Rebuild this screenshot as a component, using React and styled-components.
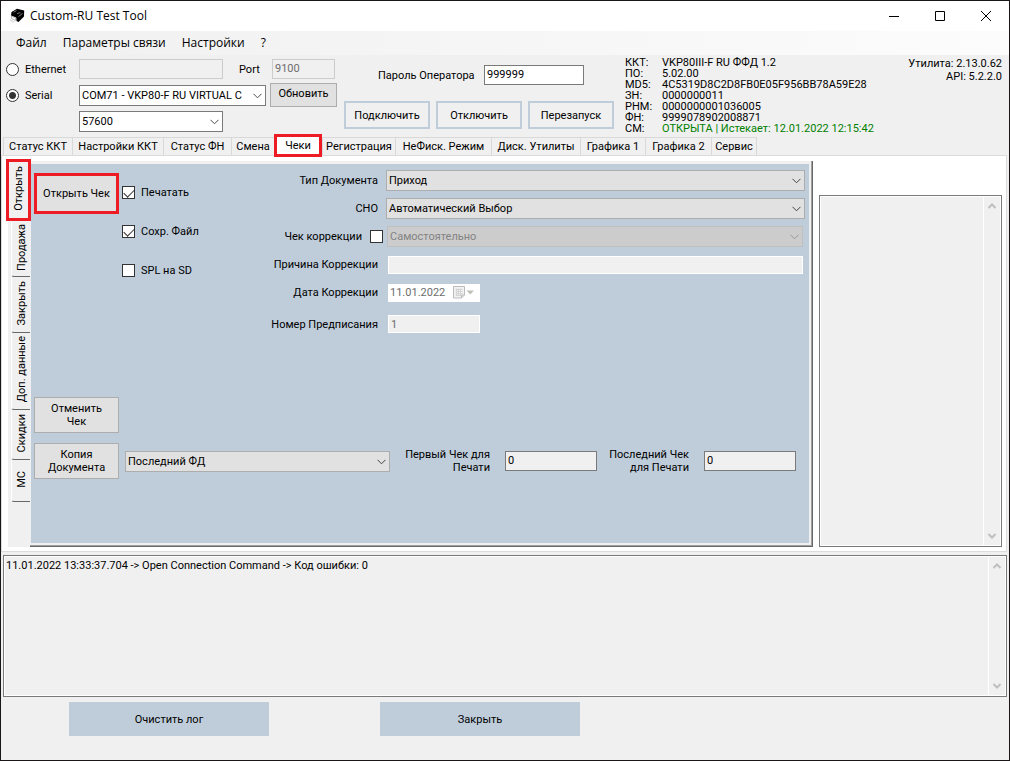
import React, { useState } from "react"
import styled, { createGlobalStyle, css } from "styled-components"

const tabs = [
    { label: "Статус ККТ", width: 69 },
    { label: "Настройки ККТ", width: 91 },
    { label: "Статус ФН", width: 68 },
    { label: "Смена", width: 43 },
    { label: "Чеки", width: 48 },
    { label: "Регистрация", width: 73 },
    { label: "НеФиск. Режим", width: 96 },
    { label: "Диск. Утилиты", width: 89 },
    { label: "Графика 1", width: 65 },
    { label: "Графика 2", width: 66 },
    { label: "Сервис", width: 46 },
]

const sideTabs = [
    { label: "Открыть", height: 62 },
    { label: "Продажа", height: 56 },
    { label: "Закрыть", height: 56 },
    { label: "Доп. данные", height: 77 },
    { label: "Скидки", height: 50 },
    { label: "МС", height: 42 },
]

const info = [
    { name: "ККТ:", value: "VKP80III-F RU ФФД 1.2" },
    { name: "ПО:", value: "5.02.00" },
    { name: "MD5:", value: "4C5319D8C2D8FB0E05F956BB78A59E28" },
    { name: "ЗН:", value: "0000000011" },
    { name: "РНМ:", value: "0000000001036005" },
    { name: "ФН:", value: "9999078902008871" },
    { name: "СМ:", value: "ОТКРЫТА | Истекает: 12.01.2022 12:15:42", ok: true },
]

function Chevron() {
    return (
        <svg width="9" height="6" viewBox="0 0 9 6" fill="none" stroke="currentColor">
            <path d="M0.5 0.8 L4.5 4.8 L8.5 0.8" />
        </svg>
    )
}

function Combo({ value, label, id, disabled, variant, width }) {
    return (
        <ComboBox $width={width} $variant={variant}>
            <select id={id} aria-label={label} disabled={disabled} defaultValue={value}>
                <option>{value}</option>
            </select>
            <ComboArrow><Chevron /></ComboArrow>
        </ComboBox>
    )
}

function ScrollArrow({ up }) {
    return (
        <svg width="8" height="6" viewBox="0 0 8 6" fill="none" stroke="#bfbfbf" strokeWidth="2">
            <path d={up ? "M0.5 5 L4 1.5 L7.5 5" : "M0.5 1 L4 4.5 L7.5 1"} />
        </svg>
    )
}

function ScrollText({ value, label }) {
    return (
        <ScrollBox>
            <textarea readOnly aria-label={label} defaultValue={value} />
            <ScrollBar>
                <ScrollArrow up />
                <ScrollArrow />
            </ScrollBar>
        </ScrollBox>
    )
}

function Check({ label, defaultChecked }) {
    return (
        <CheckLabel>
            <CheckBox type="checkbox" defaultChecked={defaultChecked} />
            {label}
        </CheckLabel>
    )
}

function PrinterLogo() {
    return (
        <svg width="16" height="16" viewBox="0 0 16 16">
            <path d="M2.5 4 L8 0.8 L15.2 2.5 L15 8.5 L9.5 14 L7.5 13 L7.2 9.5 L2 7.5 Z" fill="#000" />
            <path d="M4.5 4.2 L7.5 2.6 M8 5.6 L11.5 4.6 M9.5 8.5 L13.5 5.5" stroke="#999" strokeWidth="0.8" />
            <path d="M2.5 8 L6.8 10 L6.5 12.5 L2.5 10.5 Z" fill="#fff" stroke="#888" strokeWidth="0.6" />
            <path d="M1 11 L4.5 13 L6.5 14.5 L3.5 14.5 L0.8 12.5 Z" fill="#ddd" />
        </svg>
    )
}

function TitleBar() {
    return (
        <Title>
            <PrinterLogo />
            <h1>Custom-RU Test Tool</h1>
            <WindowButton aria-label="Свернуть">
                <svg width="10" height="10"><path d="M0 5.5 H10" stroke="#000" /></svg>
            </WindowButton>
            <WindowButton aria-label="Развернуть">
                <svg width="10" height="10"><path d="M0.5 0.5 H9.5 V9.5 H0.5 Z" stroke="#000" fill="none" /></svg>
            </WindowButton>
            <WindowButton aria-label="Закрыть окно">
                <svg width="10" height="10"><path d="M0 0 L10 10 M10 0 L0 10" stroke="#000" /></svg>
            </WindowButton>
        </Title>
    )
}

function Connection() {
    const [mode, setMode] = useState("serial")
    return (
        <ConnectionBox>
            <ConnectionRow>
                <RadioLabel>
                    <Radio type="radio" name="mode" checked={mode === "ethernet"} onChange={() => setMode("ethernet")} />
                    Ethernet
                </RadioLabel>
                <TextInput $width={144} disabled aria-label="IP" />
                <PortLabel htmlFor="port">Port</PortLabel>
                <TextInput $width={63} id="port" disabled defaultValue="9100" />
            </ConnectionRow>
            <ConnectionRow>
                <RadioLabel>
                    <Radio type="radio" name="mode" checked={mode === "serial"} onChange={() => setMode("serial")} />
                    Serial
                </RadioLabel>
                <Combo width={187} label="COM" value="COM71 - VKP80-F RU VIRTUAL C" variant="white" />
                <RefreshButton>Обновить</RefreshButton>
            </ConnectionRow>
            <ConnectionRow $indent>
                <Combo width={144} label="Baud" value="57600" variant="white" />
            </ConnectionRow>
        </ConnectionBox>
    )
}

function Header() {
    return (
        <HeaderBox>
            <Connection />
            <Operator>
                <Password>
                    <label htmlFor="password">Пароль Оператора</label>
                    <TextInput $width={100} id="password" defaultValue="999999" />
                </Password>
                <Actions>
                    <OutlineButton>Подключить</OutlineButton>
                    <OutlineButton>Отключить</OutlineButton>
                    <OutlineButton>Перезапуск</OutlineButton>
                </Actions>
            </Operator>
            <Info>
                {info.map(x => <InfoRow key={x.name} $ok={x.ok}>
                    <dt>{x.name}</dt>
                    <dd>{x.value}</dd>
                </InfoRow>)}
            </Info>
            <Version>
                <div>Утилита: 2.13.0.62</div>
                <div>API: 5.2.2.0</div>
            </Version>
        </HeaderBox>
    )
}

function DocumentForm() {
    return (
        <Form>
            <FormRow>
                <FormLabel htmlFor="docType">Тип Документа</FormLabel>
                <Combo id="docType" value="Приход" />
            </FormRow>
            <FormRow>
                <FormLabel htmlFor="tax">СНО</FormLabel>
                <Combo id="tax" value="Автоматический Выбор" />
            </FormRow>
            <FormRow $inset>
                <CorrectionLabel>
                    Чек коррекции
                    <CheckBox type="checkbox" />
                </CorrectionLabel>
                <Combo label="Тип коррекции" value="Самостоятельно" disabled variant="disabled" />
            </FormRow>
            <FormRow $inset>
                <FormLabel htmlFor="reason">Причина Коррекции</FormLabel>
                <FlatInput id="reason" disabled />
            </FormRow>
            <FormRow $inset>
                <FormLabel htmlFor="date">Дата Коррекции</FormLabel>
                <DateBox>
                    <input id="date" disabled defaultValue="11.01.2022" />
                    <svg width="22" height="13" viewBox="0 0 22 13">
                        <path d="M0.5 0.5 H11.5 V9 L8.5 12 H0.5 Z" fill="#f2f2f2" stroke="#bbb" />
                        <path d="M2.5 3.5 H9.5 M2.5 5.5 H9.5 M2.5 7.5 H9.5 M2.5 9.5 H8 M3.5 2.5 V10 M5.5 2.5 V10 M7.5 2.5 V10" stroke="#d5d5d5" />
                        <path d="M11.5 9 H8.5 V12" fill="none" stroke="#bbb" />
                        <path d="M13.5 4.5 H21 L17.2 8.5 Z" fill="#bfbfb8" />
                    </svg>
                </DateBox>
            </FormRow>
            <FormRow $inset $tall>
                <FormLabel htmlFor="order">Номер Предписания</FormLabel>
                <FlatInput id="order" disabled defaultValue="1" $width={92} />
            </FormRow>
        </Form>
    )
}

function ReceiptPanel() {
    return (
        <Panel>
            <PanelTop>
                <OpenButton>Открыть Чек</OpenButton>
                <Checks>
                    <Check label="Печатать" defaultChecked />
                    <Check label="Сохр. Файл" defaultChecked />
                    <Check label="SPL на SD" />
                </Checks>
                <DocumentForm />
            </PanelTop>
            <PanelBottom>
                <GreyButton>Отменить Чек</GreyButton>
                <CopyRow>
                    <GreyButton>Копия Документа</GreyButton>
                    <Combo width={265} label="Документ" value="Последний ФД" />
                    <PrintLabel htmlFor="first">Первый Чек для Печати</PrintLabel>
                    <TextInput $width={92} $grey id="first" defaultValue="0" />
                    <PrintLabel htmlFor="last">Последний Чек для Печати</PrintLabel>
                    <TextInput $width={92} $grey id="last" defaultValue="0" />
                </CopyRow>
            </PanelBottom>
        </Panel>
    )
}

export default function App() {
    const [tab, setTab] = useState("Чеки")
    const [side, setSide] = useState("Открыть")
    return (
        <>
            <GlobalStyle />
            <Window>
                <TitleBar />
                <Menu>
                    <button>Файл</button>
                    <button>Параметры связи</button>
                    <button>Настройки</button>
                    <button>?</button>
                </Menu>
                <Header />
                <TabStrip role="tablist">
                    {tabs.map(x => <Tab key={x.label} role="tab" $width={x.width}
                        aria-selected={x.label === tab} $active={x.label === tab}
                        onClick={() => setTab(x.label)}>{x.label}</Tab>)}
                </TabStrip>
                <Page>
                    <SideTabs role="tablist">
                        {sideTabs.map(x => <SideTab key={x.label} role="tab" $height={x.height}
                            aria-selected={x.label === side} $active={x.label === side}
                            onClick={() => setSide(x.label)}><span>{x.label}</span></SideTab>)}
                    </SideTabs>
                    <ReceiptPanel />
                    <Result>
                        <ScrollText label="Ответ" />
                    </Result>
                </Page>
                <Log>
                    <ScrollText label="Лог" value="11.01.2022 13:33:37.704 -> Open Connection Command -> Код ошибки: 0" />
                </Log>
                <Footer>
                    <FooterButton>Очистить лог</FooterButton>
                    <FooterButton>Закрыть</FooterButton>
                </Footer>
            </Window>
        </>
    )
}

const GlobalStyle = createGlobalStyle`
    * {
        box-sizing: border-box;
    }
    body {
        margin: 0;
        color: #000;
        font: 11px/13px Roboto, "Liberation Sans", sans-serif;
    }
    button, input, select, textarea {
        margin: 0;
        padding: 0;
        border: none;
        border-radius: 0;
        outline: none;
        color: inherit;
        font: inherit;
    }
    svg {
        display: block;
        flex: none;
    }
`
const highlight = css`
    &::after {
        content: "";
        position: absolute;
        inset: 0;
        border: 3px solid #ed1c24;
    }
`
const Window = styled.div`
    display: flex;
    flex-direction: column;
    min-height: 100vh;
    border: 1px solid #1a1617;
    background-color: #f0f0f0;
`
const Title = styled.header`
    display: flex;
    align-items: center;
    height: 30px;
    padding-left: 8px;
    background-color: #fff;
    h1 {
        flex: 1;
        margin: 0 0 0 5px;
        font: 12px/16px "Open Sans", "Noto Sans", sans-serif;
    }
`
const WindowButton = styled.button`
    display: flex;
    align-items: center;
    justify-content: center;
    width: 46px;
    height: 30px;
    background: none;
`
const Menu = styled.nav`
    display: flex;
    height: 24px;
    padding-left: 7px;
    background: linear-gradient(to right, #f0f0f0, #fcfcfc);
    button {
        padding: 0 8px;
        background: none;
        font: 12px/16px "Open Sans", "Noto Sans", sans-serif;
    }
`
const HeaderBox = styled.section`
    display: flex;
    height: 82px;
    padding: 2px 7px 0 5px;
`
const ConnectionBox = styled.div`
    display: flex;
    flex-direction: column;
    gap: 2px;
    width: 338px;
`
const ConnectionRow = styled.div`
    display: flex;
    align-items: center;
    height: 24px;
    padding-left: ${props => props.$indent ? "73px" : "0"};
`
const RadioLabel = styled.label`
    display: flex;
    align-items: center;
    gap: 6px;
    width: 73px;
`
const Radio = styled.input`
    appearance: none;
    width: 13px;
    height: 13px;
    border: 1px solid #333;
    border-radius: 50%;
    background-color: #fff;
    &:checked {
        background: radial-gradient(circle, #333 3px, #fff 4px);
    }
`
const PortLabel = styled.label`
    width: 49px;
    padding-left: 16px;
`
const TextInput = styled.input`
    width: ${props => props.$width}px;
    height: 20px;
    padding: 0 2px 2px;
    border: 1px solid #7a7a7a;
    background-color: ${props => props.$grey ? "#f0f0f0" : "#fff"};
    &:disabled {
        border-color: #ccc;
        background-color: #f0f0f0;
        color: #6d6d6d;
    }
`
const ComboBox = styled.div`
    position: relative;
    flex: ${props => props.$width ? "none" : "1"};
    width: ${props => props.$width ? `${props.$width}px` : "auto"};
    height: 21px;
    color: ${props => props.$variant === "disabled" ? "#838383" : "#000"};
    select {
        appearance: none;
        width: 100%;
        height: 100%;
        padding: 0 16px 0 2px;
        border: 1px solid ${props => props.$variant === "white" ? "#7a7a7a" : props.$variant === "disabled" ? "#bfbfbf" : "#adadad"};
        background-color: ${props => props.$variant === "white" ? "#fff" : props.$variant === "disabled" ? "#ccc" : "#e1e1e1"};
        opacity: 1;
    }
`
const ComboArrow = styled.span`
    position: absolute;
    top: 8px;
    right: 4px;
    opacity: 0.7;
    pointer-events: none;
`
const GreyButton = styled.button`
    width: 85px;
    height: 36px;
    padding: 0 8px;
    border: 1px solid #adadad;
    background-color: #e1e1e1;
`
const RefreshButton = styled(GreyButton)`
    width: 67px;
    height: 24px;
    margin-left: 4px;
    padding: 0 0 4px;
`
const Operator = styled.div`
    display: flex;
    flex-direction: column;
    gap: 16px;
    width: 281px;
    padding-top: 8px;
`
const Password = styled.div`
    display: flex;
    align-items: center;
    gap: 10px;
    padding-left: 34px;
    label {
        width: 96px;
        white-space: nowrap;
    }
`
const Actions = styled.div`
    display: flex;
    gap: 6px;
`
const OutlineButton = styled.button`
    width: 86px;
    height: 28px;
    border: 2px solid #bfcddb;
    background-color: #f0f0f0;
`
const Info = styled.dl`
    flex: 1;
    margin: 0;
    white-space: nowrap;
`
const InfoRow = styled.div`
    display: flex;
    line-height: 11px;
    dt {
        width: 37px;
    }
    dd {
        margin: 0;
        color: ${props => props.$ok ? "#008000" : "inherit"};
    }
`
const Version = styled.div`
    text-align: right;
`
const TabStrip = styled.div`
    display: flex;
    height: 18px;
    padding-left: 2px;
`
const Tab = styled.button`
    position: relative;
    width: ${props => props.$width}px;
    border: solid #d9d9d9;
    border-width: 1px 0 0 1px;
    background-color: #f0f0f0;
    white-space: nowrap;
    &:last-child {
        border-right-width: 1px;
    }
    ${props => props.$active && css`
        margin: -3px 0 -2px;
        border: none;
        background-color: #fff;
        z-index: 1;
        ${highlight}
    `}
`
const Page = styled.main`
    display: flex;
    flex: 1;
    margin-right: 2px;
    padding: 5px 4px 4px 6px;
    border: 1px solid #dcdcdc;
    background-color: #fff;
`
const SideTabs = styled.div`
    display: flex;
    flex-direction: column;
    width: 22px;
    padding-left: 3px;
    background-color: #f0f0f0;
`
const SideTab = styled.button`
    position: relative;
    height: ${props => props.$height}px;
    border: solid #696969;
    border-width: 0 0 1px;
    border-left: 1px solid #fff;
    border-bottom-left-radius: 3px;
    background-color: #f0f0f0;
    white-space: nowrap;
    span {
        writing-mode: vertical-rl;
        transform: rotate(180deg);
    }
    ${props => props.$active && css`
        margin: -2px -1px 0 -5px;
        border: none;
        ${highlight}
    `}
`
const Panel = styled.section`
    display: flex;
    flex: 1;
    flex-direction: column;
    padding: 9px 7px 67px 4px;
    border: solid #696969;
    border-width: 0 1px 1px 0;
    background-color: #bfcddb;
    box-shadow: inset -1px -1px #a0a0a0, inset -3px -3px #f0f0f0, inset 1px 3px #f0f0f0;
`
const PanelTop = styled.div`
    display: flex;
`
const OpenButton = styled.button`
    position: relative;
    width: 85px;
    height: 41px;
    margin-top: 3px;
    background-color: #e1e1e1;
    ${highlight}
`
const Checks = styled.div`
    display: flex;
    flex-direction: column;
    gap: 26px;
    width: 151px;
    padding: 16px 0 0 3px;
`
const CheckLabel = styled.label`
    display: flex;
    align-items: center;
    gap: 6px;
`
const CheckBox = styled.input`
    appearance: none;
    flex: none;
    width: 13px;
    height: 13px;
    border: 1px solid #333;
    background-color: #fff;
    &:checked::before {
        content: "";
        display: block;
        width: 9px;
        height: 5px;
        margin: 2px 1px;
        border: solid #333;
        border-width: 0 0 1px 1px;
        transform: rotate(-45deg);
    }
`
const Form = styled.div`
    display: flex;
    flex: 1;
    flex-direction: column;
    gap: 7px;
`
const FormRow = styled.div`
    display: flex;
    align-items: center;
    height: ${props => props.$tall ? "28px" : "21px"};
    padding: 0 ${props => props.$inset ? "2px" : "0"} 0 0;
    gap: ${props => props.$inset ? "10px" : "8px"};
`
const FormLabel = styled.label`
    width: 108px;
    white-space: nowrap;
    text-align: right;
`
const CorrectionLabel = styled.label`
    display: flex;
    align-items: center;
    justify-content: flex-end;
    gap: 8px;
    width: 113px;
    margin-right: -6px;
    white-space: nowrap;
`
const FlatInput = styled.input`
    flex: ${props => props.$width ? "none" : "1"};
    width: ${props => props.$width}px;
    height: 18px;
    padding: 0 2px;
    border: 1px solid #fff;
    background-color: #f0f0f0;
    color: #6d6d6d;
`
const DateBox = styled.div`
    display: flex;
    align-items: center;
    width: 92px;
    height: 18px;
    padding-left: 2px;
    background-color: #fff;
    color: #6d6d6d;
    input {
        width: 63px;
        background: none;
    }
`
const PanelBottom = styled.div`
    display: flex;
    flex-direction: column;
    gap: 10px;
    margin-top: auto;
`
const CopyRow = styled.div`
    display: flex;
    align-items: center;
    ${ComboBox} {
        margin: 0 8px 0 6px;
    }
`
const PrintLabel = styled.label`
    width: 92px;
    margin-right: 15px;
    text-align: right;
`
const Result = styled.div`
    display: flex;
    width: 189px;
    padding: 34px 0 0 6px;
`
const ScrollBox = styled.div`
    display: flex;
    flex: 1;
    padding: 1px;
    border: 1px solid #7a7a7a;
    background-color: #fff;
    textarea {
        flex: 1;
        min-width: 0;
        padding: 2px 1px;
        resize: none;
        overflow: hidden;
        background-color: #f0f0f0;
    }
`
const ScrollBar = styled.div`
    display: flex;
    flex-direction: column;
    align-items: center;
    justify-content: space-between;
    width: 16px;
    margin-left: 1px;
    padding: 6px 0;
    background-color: #f0f0f0;
`
const Log = styled.section`
    display: flex;
    height: 142px;
    margin: 3px 2px 0;
`
const Footer = styled.footer`
    display: flex;
    gap: 111px;
    padding: 5px 68px 24px;
`
const FooterButton = styled.button`
    width: 200px;
    height: 34px;
    background-color: #bfcddb;
`
